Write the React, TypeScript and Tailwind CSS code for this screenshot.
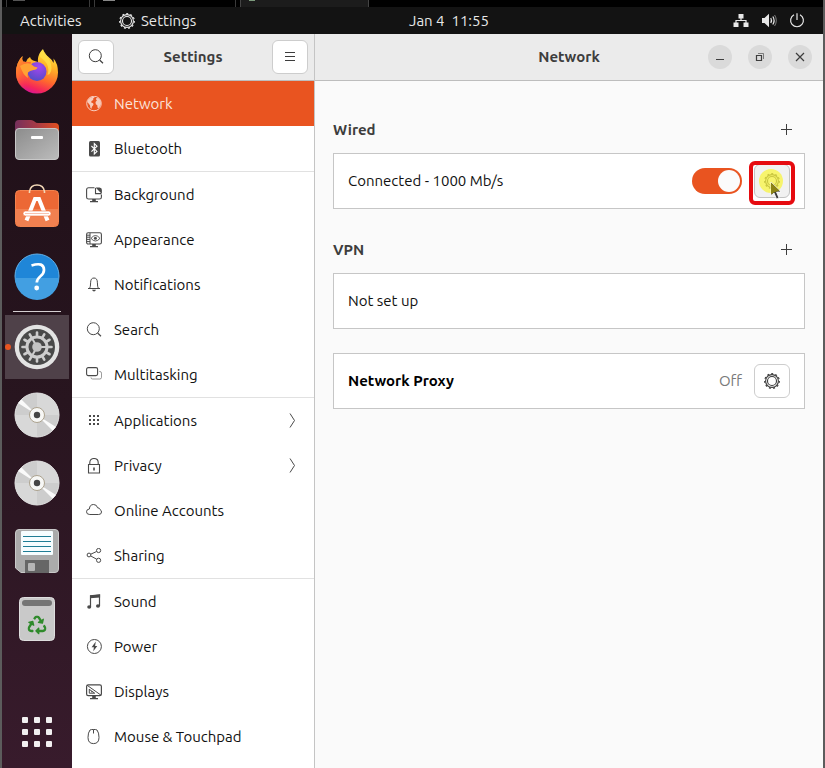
import React, { useState } from "react";
import { FaRecycle } from "react-icons/fa";

type IconProps = { className?: string };

/* ---------- symbolic 16px icons ---------- */

function Sym({ children, className = "" }: { children: React.ReactNode; className?: string }) {
  return (
    <svg
      viewBox="0 0 16 16"
      width="16"
      height="16"
      fill="none"
      stroke="currentColor"
      strokeWidth="1"
      aria-hidden="true"
      className={"shrink-0 " + className}
    >
      {children}
    </svg>
  );
}

const GearIcon = ({ className }: IconProps) => (
  <Sym className={className}>
    <circle cx="8" cy="8" r="6.4" strokeWidth="1.1" />
    <circle cx="8" cy="8" r="7.3" strokeWidth="1.2" strokeDasharray="2 2.17" />
    <circle cx="8" cy="8" r="4.5" strokeWidth="1.1" />
  </Sym>
);

const SearchIcon = ({ className }: IconProps) => (
  <Sym className={className}>
    <circle cx="7.3" cy="6.7" r="6" />
    <path d="M11.6 11 15 14.2" strokeWidth="1.2" />
  </Sym>
);

const GlobeIcon = () => (
  <Sym className="opacity-70">
    <circle cx="8" cy="7.5" r="7.3" />
    <path
      d="M2 3.7 4.500 1.500 8 .5 8.600 1.500 7 2.700 7.400 4 5.800 4.800 5 6.200 6.600 7 7.600 8 7 9.600 5.900 10.800 5.500 12.800 4.400 12 4 9.300 2.600 7.600 1.400 6zM10.400 1.900 12.600 2.300 14.600 4.500 15 7.900 13.900 10.500 12.500 12.200 11.500 11.500 11.300 9.200 9.800 8.200 9.500 6 10.900 4.600 10 3.300z"
      fill="currentColor"
      stroke="none"
    />
  </Sym>
);

const BluetoothIcon = () => (
  <Sym>
    <rect x="3" y="0" width="11" height="15.500" rx="1.500" fill="currentColor" stroke="none" />
    <path d="M5.400 5 11 10.400 8.300 13V2.600L11 5.200 5.400 10.600" stroke="#fff" strokeWidth="1.100" />
  </Sym>
);

const BackgroundIcon = () => (
  <Sym>
    <path d="M8.500.8H2.600Q.6.8.6 2.800v7.400q0 1.800 2 1.800h10.800q2 0 2-1.800V7.600M9.500 1v5.600H15" strokeWidth="1.100" />
    <path d="M9.500.5h4q2.400 0 2.400 2.500v4z" fill="currentColor" stroke="none" />
    <path d="M6.200 12h3.600v2H12v1.200H4V14h2.200z" fill="currentColor" stroke="none" />
  </Sym>
);

const AppearanceIcon = () => (
  <Sym>
    <rect x=".6" y=".8" width="14.800" height="11.200" rx="1.600" strokeWidth="1.100" />
    <path d="M4 1v11M1 3.200h3M1 5.200h3M1 7.400h3M1 9.600h3" />
    <path d="M5 6.400Q9.400.6 14 6.400 9.400 11.600 5 6.400z" strokeWidth=".9" />
    <circle cx="9.400" cy="6.200" r="1.500" fill="currentColor" stroke="none" />
    <path d="M6.200 12h3.600v2H12v1.200H4V14h2.200z" fill="currentColor" stroke="none" />
  </Sym>
);

const BellIcon = () => (
  <Sym>
    <path d="M2 11.500h12M3.600 11.500Q4.600 9.800 4.600 5.800 4.600 1 8 1t3.400 4.800q0 4 1 5.700" />
    <path d="M6 12.800h4Q9.400 14.500 8 14.500T6 12.800z" fill="currentColor" stroke="none" />
  </Sym>
);

const MultitaskIcon = () => (
  <Sym>
    <rect x=".6" y=".6" width="11" height="8" rx="1.600" strokeWidth="1.100" />
    <path d="M13.200 4.500h.6q1.700 0 1.700 1.600v4.300q0 1.600-1.700 1.600H6.600Q5 12 5 10.400" opacity=".55" />
  </Sym>
);

const GridIcon = () => (
  <Sym>
    <path
      d="M3 2h2v2H3zM7 2h2v2H7zM11 2h2v2h-2zM3 6h2v2H3zM7 6h2v2H7zM11 6h2v2h-2zM3 10h2v2H3zM7 10h2v2H7zM11 10h2v2h-2z"
      fill="currentColor"
      stroke="none"
    />
  </Sym>
);

const LockIcon = () => (
  <Sym>
    <path d="M2.500 6.500h11v8.500h-11zM3.800 6.500V4.600Q3.800.500 8 .500t4.200 4.100v1.900" strokeWidth="1.100" />
    <path d="M7.200 9.500h1.600v3H7.200z" fill="currentColor" stroke="none" />
  </Sym>
);

const CloudIcon = () => (
  <Sym>
    <path d="M3.800 11.500Q.5 11.500.5 8.800.5 6.200 3.400 6 3.600 1.500 7.600 1.500 10.800 1.500 11.600 4.800 13.400 4.600 14 6.500 15.500 7.300 15.500 9 15.500 11.500 12.600 11.500z" />
  </Sym>
);

const ShareIcon = () => (
  <Sym>
    <circle cx="3" cy="7" r="1.900" />
    <circle cx="12.600" cy="2.500" r="2.100" />
    <circle cx="12.600" cy="12.300" r="2.100" />
    <path d="M4.800 6.200 10.600 3.500M4.800 8 10.800 11.300" />
  </Sym>
);

const MusicIcon = () => (
  <Sym>
    <path d="M4.500 13V1.800L13.500.9V12" strokeWidth="1.200" />
    <path d="M4 1.400 14.100.4v3L4 4.200z" fill="currentColor" stroke="none" />
    <ellipse cx="3.200" cy="13" rx="2" ry="1.800" fill="currentColor" stroke="none" />
    <ellipse cx="12" cy="12" rx="2" ry="1.800" fill="currentColor" stroke="none" />
  </Sym>
);

const PowerIcon = () => (
  <Sym>
    <circle cx="8.400" cy="7.500" r="7" />
    <path d="M9.800 2.600 5.600 8.300h2.300l-.6 4 4-5.400H9.100z" fill="currentColor" stroke="none" />
  </Sym>
);

const DisplaysIcon = () => (
  <Sym>
    <rect x=".6" y=".8" width="14.800" height="10.800" rx="1.600" strokeWidth="1.200" />
    <path d="M1 1.200 15 11.200M3.300 5v4.200h5.400L3.300 5.400M5 7.800h1.500" />
    <path d="M6.200 12h3.600v2H12v1.200H4V14h2.200z" fill="currentColor" stroke="none" />
  </Sym>
);

const MouseIcon = () => (
  <Sym>
    <path d="M4 1Q2 3.600 2 8.400 2 14.600 7.500 14.600T13 8.400Q13 3.600 11 1 9.500.300 7.500.500 5.500.300 4 1zM7.500.5v4" />
  </Sym>
);

/* ---------- dock artwork, 48px ---------- */

function Art({ children }: { children: React.ReactNode }) {
  return (
    <svg viewBox="0 0 48 48" width="48" height="48" aria-hidden="true">
      {children}
    </svg>
  );
}

const Firefox = () => (
  <Art>
    <defs>
      <linearGradient id="ff-body" x1=".75" y1="0" x2=".4" y2="1">
        <stop offset="0" stopColor="#fff04a" />
        <stop offset=".35" stopColor="#ffb327" />
        <stop offset=".65" stopColor="#ff6a2c" />
        <stop offset=".88" stopColor="#f5265a" />
        <stop offset="1" stopColor="#d9168f" />
      </linearGradient>
      <linearGradient id="ff-left" x1="0" y1="0" x2=".6" y2="1">
        <stop offset="0" stopColor="#ffa32b" />
        <stop offset=".5" stopColor="#ff6a30" />
        <stop offset="1" stopColor="#f8305a" stopOpacity="0" />
      </linearGradient>
      <radialGradient id="ff-globe" cx=".6" cy=".25" r=".85">
        <stop offset="0" stopColor="#a347f0" />
        <stop offset=".55" stopColor="#7549d6" />
        <stop offset="1" stopColor="#4a4fc4" />
      </radialGradient>
    </defs>
    <path
      d="M30 1C26 5 24.500 9 25 14L20 12.500Q17.500 11.500 17 9 14 10.500 13 14L10 13.500Q8.500 11 9.500 8 3 14.500 3 24.500A21 21 0 0 0 45 24.500Q45 15.500 40.500 10.500 41 13 40.500 15 39 11.500 35 8.500 31 5.500 30 1z"
      fill="url(#ff-body)"
    />
    <path d="M9.500 8Q3 14.500 3 24.500 3 36 12 42 20 40 15 28L18 14 13 14 10 13.500Q8.500 11 9.500 8z" fill="url(#ff-left)" />
    <circle cx="24" cy="23.500" r="9.500" fill="url(#ff-globe)" />
    <path
      d="M7 18Q13 14 18 16L21 18.500 24.500 19.500Q24 21.500 20.500 22 16.500 22.500 15 24.500 14 27 15 30 10 27 7 18z"
      fill="#ffa233"
    />
    <path d="M27 9Q38 16 34.500 27 40 25 38 16 36 10 30 2 26 5 27 9z" fill="#ffe14a" opacity=".75" />
  </Art>
);

const Files = () => (
  <Art>
    <defs>
      <linearGradient id="fl-back" x1="0" y1="0" x2="1" y2="0">
        <stop offset="0" stopColor="#75305c" />
        <stop offset=".5" stopColor="#a83a45" />
        <stop offset="1" stopColor="#e2501f" />
      </linearGradient>
      <linearGradient id="fl-front" x1="0" y1="0" x2="1" y2="1">
        <stop offset="0" stopColor="#8c8c8c" />
        <stop offset="1" stopColor="#bcbcbc" />
      </linearGradient>
    </defs>
    <path d="M2 8q0-4 4-4h12q2 0 3.500 1.500T25 7h17q4 0 4 4v12H2z" fill="url(#fl-back)" />
    <rect x="2.500" y="12.500" width="43" height="31" rx="3.500" fill="url(#fl-front)" stroke="#c8c8c8" />
    <rect x="18" y="20" width="12" height="3" rx="1" fill="#fff" />
  </Art>
);

const Software = () => (
  <Art>
    <rect x="2.500" y="6.500" width="43" height="36" rx="4" fill="#ec6835" stroke="#f3834f" />
    <path d="M3 25h42v13q0 4-4 4H7q-4 0-4-4z" fill="#f18050" />
    <path d="M16.500 9V7.500Q17.500 1 24 1T31.500 7.500V9" fill="none" stroke="#f3d9b8" strokeWidth="1.600" />
    <path d="M13.500 36.500 22 15h4l8.500 21.500" fill="none" stroke="#fff" strokeWidth="4" />
    <rect x="10" y="27" width="28" height="5" rx="2.500" fill="#fff" stroke="#ee7444" strokeWidth=".6" />
    <path d="M12 29.500h24" stroke="#f6b399" strokeWidth=".8" />
  </Art>
);

const Help = () => (
  <Art>
    <circle cx="24" cy="24" r="22" fill="#1f86d8" stroke="#62b0e8" />
    <path d="M2 26h44A22 22 0 0 1 2 26z" fill="#429fe2" />
    <path d="M18.500 13.500Q31 9.500 31 18q0 3.500-3.800 6.500-3.400 2.800-3.400 6" fill="none" stroke="#fff" strokeWidth="2.700" />
    <circle cx="23.700" cy="36" r="2.400" fill="#fff" />
  </Art>
);

const teeth = Array.from({ length: 12 }, (_, i) => i * 30);

const SettingsArt = () => (
  <Art>
    <circle cx="24" cy="24" r="22.300" fill="#e3e3e3" />
    <circle cx="24" cy="24" r="18" fill="#4a4a4a" />
    <g stroke="#cdcdcd" fill="none">
      <circle cx="24" cy="24" r="10" strokeWidth="3" />
      {teeth.map((a) => (
        <path key={a} d="M24 13.500V9.500" strokeWidth="2.600" strokeLinecap="round" transform={`rotate(${a} 24 24)`} />
      ))}
      {[-30, 90, 210].map((a) => (
        <path key={a} d="M24 24V14" strokeWidth="2" transform={`rotate(${a} 24 24)`} />
      ))}
    </g>
    <circle cx="24" cy="24" r="4.800" fill="#c4c4c4" />
  </Art>
);

const Disc = () => (
  <Art>
    <circle cx="24" cy="24" r="22" fill="#cdcdcd" stroke="#e4e4e4" />
    <path d="M24 24V2A22 22 0 0 1 46 24zM24 24V46A22 22 0 0 1 2 24z" fill="#d8d8d8" />
    <path d="M24 24 5 12 8.500 8.500zM24 24 43 36 39.500 39.500z" fill="#fafafa" />
    <circle cx="24" cy="24" r="7.500" fill="#f7f7f5" stroke="#aca28e" />
    <circle cx="24" cy="24" r="3.200" fill="#454545" />
  </Art>
);

const Floppy = () => (
  <Art>
    <path d="M6 2.500h36q3.500 0 3.500 3.500v36q0 3.500-3.500 3.500H8L2.500 41V6q0-3.500 3.500-3.500z" fill="#ababab" stroke="#c9c9c9" />
    <rect x="8" y="4" width="32" height="24" rx="1" fill="#f6fdff" />
    <path d="M10 9.500h28M10 14.500h28M10 19.500h28M10 24.500h28" stroke="#1f7d95" strokeWidth="1.200" />
    <rect x="12" y="33" width="24" height="13" fill="#666" />
    <rect x="15" y="36" width="7" height="8" rx="1" fill="#b5b5b5" />
  </Art>
);

const Trash = () => (
  <Art>
    <rect x="6.500" y="2.500" width="35" height="43" rx="4" fill="#c9c9c9" stroke="#dedede" />
    <rect x="9" y="5" width="30" height="6" rx="3" fill="#757575" />
    <FaRecycle x="14.500" y="20.500" size={19} color="#2f8a2b" />
  </Art>
);

/* ---------- data ---------- */

const groups: { label: string; icon: React.ReactNode; more?: boolean }[][] = [
  [
    { label: "Network", icon: <GlobeIcon /> },
    { label: "Bluetooth", icon: <BluetoothIcon /> },
  ],
  [
    { label: "Background", icon: <BackgroundIcon /> },
    { label: "Appearance", icon: <AppearanceIcon /> },
    { label: "Notifications", icon: <BellIcon /> },
    { label: "Search", icon: <SearchIcon /> },
    { label: "Multitasking", icon: <MultitaskIcon /> },
  ],
  [
    { label: "Applications", icon: <GridIcon />, more: true },
    { label: "Privacy", icon: <LockIcon />, more: true },
    { label: "Online Accounts", icon: <CloudIcon /> },
    { label: "Sharing", icon: <ShareIcon /> },
  ],
  [
    { label: "Sound", icon: <MusicIcon /> },
    { label: "Power", icon: <PowerIcon /> },
    { label: "Displays", icon: <DisplaysIcon /> },
    { label: "Mouse & Touchpad", icon: <MouseIcon /> },
  ],
];

function DockItem({ label, children, active = false }: { label: string; children: React.ReactNode; active?: boolean }) {
  return (
    <li className="relative">
      <button
        type="button"
        aria-label={label}
        className={"flex size-16 items-center justify-center " + (active ? "bg-[#4f4149]" : "")}
      >
        {children}
      </button>
      {active && <span className="absolute top-[29px] left-0 size-1.5 rounded-full bg-[#e95420]" />}
    </li>
  );
}

function Dock() {
  return (
    <nav
      aria-label="Dock"
      className="flex w-[70px] shrink-0 flex-col items-center bg-linear-to-b from-[#1e0f17] via-[#28151f] to-[#381b2c] pt-1.5"
    >
      <ul className="flex flex-col gap-1">
        <DockItem label="Firefox"><Firefox /></DockItem>
        <DockItem label="Files"><Files /></DockItem>
        <DockItem label="Ubuntu Software"><Software /></DockItem>
        <DockItem label="Help"><Help /></DockItem>
      </ul>
      <hr className="my-[3px] h-px w-12 border-0 bg-[#d5cfd2]" />
      <ul className="flex flex-col gap-1">
        <DockItem label="Settings" active><SettingsArt /></DockItem>
        <DockItem label="Disc 1"><Disc /></DockItem>
        <DockItem label="Disc 2"><Disc /></DockItem>
        <DockItem label="Floppy"><Floppy /></DockItem>
        <DockItem label="Trash"><Trash /></DockItem>
      </ul>
      <button type="button" aria-label="Show Applications" className="mt-auto mb-[21px] grid grid-cols-3 gap-1.5">
        {Array.from({ length: 9 }, (_, i) => (
          <span key={i} className="size-1.5 rounded-[1px] bg-[#f2f0f1]" />
        ))}
      </button>
    </nav>
  );
}

function TopBar() {
  return (
    <header className="grid h-[27px] shrink-0 grid-cols-[407px_1fr_auto] items-center bg-[#131313] pr-[18px] text-[#e8e8e8]">
      <div className="flex items-center pl-[18px]">
        <button type="button" className="w-[99px] text-left">Activities</button>
        <button type="button" className="flex items-center gap-1.5">
          <GearIcon />
          Settings
        </button>
      </div>
      <button type="button" className="justify-self-start whitespace-pre">Jan 4  11:55</button>
      <button type="button" aria-label="System menu" className="flex items-center gap-3">
        <Sym>
          <path d="M5.500 1h5v4.500h-5zM.5 9.500h5V14h-5zM10.500 9.500h5V14h-5z" fill="currentColor" stroke="none" />
          <path d="M8 5v2.500M3 10V7.500h10V10" strokeWidth="1.200" />
        </Sym>
        <Sym>
          <path d="M1 5h2.500L8 .8v13.400L3.500 10H1z" fill="currentColor" stroke="none" />
          <path d="M9.800 5q1.400 2.500 0 5M11.800 3.500q2.600 4 0 8" strokeWidth="1.200" />
          <path d="M13.600 2q3.400 5.500 0 11" opacity=".5" />
        </Sym>
        <Sym>
          <path d="M5 1.700A6.400 6.400 0 1 0 11 1.700M8 .3V7" strokeWidth="1.200" />
        </Sym>
      </button>
    </header>
  );
}

const toolButton = "flex h-[34px] w-9 items-center justify-center rounded-md border border-[#cdcdcd] bg-white text-[#3d3d3d]";

function Sidebar() {
  const [selected, setSelected] = useState("Network");
  return (
    <aside className="flex w-[243px] shrink-0 flex-col border-r border-[#c4c4c4] bg-white">
      <div className="flex h-[47px] shrink-0 items-center justify-between border-b border-[#bdbdbd] bg-[#ebebeb] px-1.5">
        <button type="button" aria-label="Search" className={toolButton}><SearchIcon /></button>
        <h1 className="font-bold text-[#3d3d3d]">Settings</h1>
        <button type="button" aria-label="Menu" className={toolButton}>
          <Sym><path d="M3 3.500h10M3 7.500h10M3 11.500h10" /></Sym>
        </button>
      </div>
      <nav aria-label="Settings panels" className="divide-y divide-[#e1e1e1]">
        {groups.map((group) => (
          <ul key={group[0].label}>
            {group.map(({ label, icon, more }) => (
              <li key={label}>
                <button
                  type="button"
                  onClick={() => setSelected(label)}
                  className={
                    "flex h-[45px] w-full items-center gap-3 px-3.5 text-left " +
                    (selected === label ? "bg-[#e95420] text-white" : "text-[#4a4a4a]")
                  }
                >
                  {icon}
                  <span className={"flex-1 " + (selected === label ? "text-[#fbe3da]" : "text-[#111]")}>{label}</span>
                  {more && <Sym><path d="M6 .5 10.500 7.500 6 14.500" /></Sym>}
                </button>
              </li>
            ))}
          </ul>
        ))}
      </nav>
    </aside>
  );
}

function WindowButton({ label, children }: { label: string; children: React.ReactNode }) {
  return (
    <button type="button" aria-label={label} className="flex size-6 items-center justify-center rounded-full bg-[#dadada] text-[#3d3d3d]">
      {children}
    </button>
  );
}

function SectionHeader({ title, action }: { title: string; action: string }) {
  return (
    <div className="mb-[11px] flex h-6 items-center justify-between pr-2.5">
      <h3 className="font-bold text-[#3d3d3d]">{title}</h3>
      <button type="button" aria-label={action} className="text-[#3d3d3d]">
        <Sym><path d="M7.500 2v11M2 7.500h11" /></Sym>
      </button>
    </div>
  );
}

const card = "flex h-14 items-center border border-[#c6c6c6] bg-white px-3.5 text-[#111]";

function NetworkPanel() {
  const [wired, setWired] = useState(true);
  return (
    <main className="flex min-w-0 flex-1 flex-col bg-[#fafafa]">
      <div className="flex h-[47px] shrink-0 items-center border-b border-[#bdbdbd] bg-[#ebebeb] pr-[11px]">
        <h2 className="flex-1 pl-[115px] text-center font-bold text-[#3d3d3d]">Network</h2>
        <div className="flex gap-4">
          <WindowButton label="Minimise"><Sym><path d="M4 10.500h8" /></Sym></WindowButton>
          <WindowButton label="Restore">
            <Sym>
              <path d="M4.500 6.500h5v5h-5z" strokeWidth="1.200" />
              <path d="M6 4.500h5.500V10" opacity=".6" />
            </Sym>
          </WindowButton>
          <WindowButton label="Close"><Sym><path d="M4 4l8 8M12 4l-8 8" strokeWidth="1.200" /></Sym></WindowButton>
        </div>
      </div>

      <div className="flex flex-col px-[18px] pt-[37px]">
        <section className="mb-[29px]">
          <SectionHeader title="Wired" action="Add wired profile" />
          <div className={card}>
            <label htmlFor="wired" className="flex-1">Connected - 1000 Mb/s</label>
            <input
              id="wired"
              type="checkbox"
              role="switch"
              checked={wired}
              onChange={(e) => setWired(e.target.checked)}
              className="mr-3 h-[26px] w-[50px] appearance-none rounded-full bg-[#c6c6c6] before:m-[2px] before:block before:size-[22px] before:rounded-full before:bg-[#fbfbfb] checked:bg-[#e95420] checked:before:ml-[26px]"
            />
            <div className="relative">
              <button type="button" aria-label="Wired options" className="flex h-[34px] w-9 items-center justify-center rounded-md border border-[#c2c2c2] bg-[#f1f1f1] text-[#3d3d3d]">
                <GearIcon />
              </button>
              <span className="pointer-events-none absolute -inset-x-[5px] -top-[3px] -bottom-[7px] rounded-md border-4 border-[#e60b10]" />
              <span className="pointer-events-none absolute top-[5px] left-[5px] size-6 rounded-full bg-[#f8f440]/75" />
              <svg viewBox="0 0 14 18" width="14" height="18" aria-hidden="true" className="pointer-events-none absolute top-[18px] left-4">
                <path d="M1 0V13.500L4 11 6.500 17 9 16 6.500 10H11z" fill="#3b3b3b" stroke="#fff" strokeWidth=".8" />
                <path d="M1 .5V12.500L4 10.500 9.500 8.500z" fill="#8c8314" />
              </svg>
            </div>
          </div>
        </section>

        <section className="mb-6">
          <SectionHeader title="VPN" action="Add VPN" />
          <div className={card}>Not set up</div>
        </section>

        <section className={card}>
          <h3 className="flex-1 font-bold text-black">Network Proxy</h3>
          <span className="mr-3 text-[#7a7a7a]">Off</span>
          <button type="button" aria-label="Proxy options" className={toolButton}><GearIcon /></button>
        </section>
      </div>
    </main>
  );
}

export default function App() {
  return (
    <div className="flex h-screen flex-col overflow-hidden border-x-2 border-[#5c5c5c] bg-black font-['Ubuntu','Noto_Sans',sans-serif] text-[15px] leading-5">
      <div className="flex h-[7px] shrink-0 gap-1 pl-1" aria-hidden="true">
        <span className="w-[84px] border-x border-[#3a3a3a] pl-1.5"><i className="block h-px w-3 bg-[#555]" /></span>
        <span className="w-[142px] border-x border-[#3a3a3a] pl-2"><i className="block h-px w-3 bg-[#888]" /></span>
        <span className="w-[129px] border-x border-[#444] bg-[#1c1c1c] pl-2"><i className="block h-px w-1.5 bg-[#7c9a7c]" /></span>
      </div>
      <TopBar />
      <div className="flex min-h-0 flex-1">
        <Dock />
        <Sidebar />
        <NetworkPanel />
      </div>
    </div>
  );
}
